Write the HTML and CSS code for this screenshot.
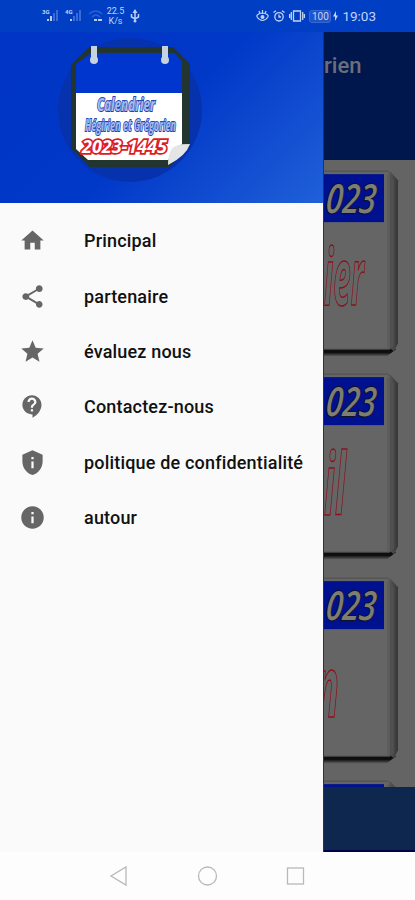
FILE: index.html
```html
<!DOCTYPE html>
<html lang="fr">
<head>
  <meta charset="UTF-8" />
  <meta name="viewport" content="width=device-width, initial-scale=1" />
  <title>Calendrier</title>
  <link rel="stylesheet" href="styles.css">
</head>
<body>

  <header class="status-bar">
    <div class="status-left">
      <svg width="20" height="16" viewBox="0 0 20 16">
        <text class="net" x="0" y="6">3G</text>
        <path d="M5 13h2v-2H5zM8 13h2V8H8z" fill="#b9cdf5"/>
        <path d="M11 13h2V5h-2zM14 13h2V2h-2z" fill="#3b69d6"/>
      </svg>
      <svg width="22" height="16" viewBox="0 0 20 16">
        <text class="net" x="0" y="6">4G</text>
        <path d="M5 13h2v-2H5z" fill="#b9cdf5"/>
        <path d="M8 13h2V8H8zM11 13h2V5h-2zM14 13h2V2h-2z" fill="#3b69d6"/>
      </svg>
      <svg class="wifi" width="16" height="16" viewBox="0 0 16 16">
        <path d="M1 6q7-6 13 0M4 9q4-4 8 0" fill="none" stroke="#2f60d2" stroke-width="1.3"/>
        <path d="M6 12h3M10 12h4" stroke="#b9cdf5" stroke-width="2"/>
      </svg>
      <div class="speed"><span>22.5</span><span>K/s</span></div>
      <svg class="usb" width="10" height="14" viewBox="0 0 10 14">
        <path d="M5 1v12M1.500 5v3L5 10l3.500-2V5" fill="none" stroke="#b9cdf5" stroke-width="1.500"/>
        <path d="M5 0l2.500 4h-5z" fill="#b9cdf5"/>
        <circle cx="5" cy="12" r="1.500" fill="#b9cdf5"/>
      </svg>
    </div>
    <div class="status-right">
      <svg width="13" height="12" viewBox="0 0 13 12">
        <path d="M1 5q5.500-4 11 0M1 7q5.500 7 11 0M3 1l1 3M6.500 0v4M10 1L9 4M1 5v2M12 5v2" fill="none" stroke="#c3d3f5" stroke-width="1.200"/>
        <circle cx="6.500" cy="7" r="2" fill="#c3d3f5"/>
      </svg>
      <svg width="12" height="12" viewBox="0 0 12 12">
        <g fill="none" stroke="#c3d3f5" stroke-width="1.300">
          <circle cx="6" cy="6.800" r="4.200"/>
          <path d="M.5 2.500L3 .7M11.500 2.500L9 .7M6 4.500V7h2"/>
        </g>
      </svg>
      <svg width="16" height="12" viewBox="0 0 16 12">
        <path d="M4.500 1h7v10h-7zM2.300 2v8M13.700 2v8M.6 4v4M15.400 4v4" fill="none" stroke="#c3d3f5" stroke-width="1.300"/>
      </svg>
      <span class="battery">100</span>
      <svg class="bolt" width="5" height="10" viewBox="0 0 5 10">
        <path d="M3 0L0 5.500h2L2 10l3-5.500H3z" fill="#c3d3f5"/>
      </svg>
      <span class="clock">19:03</span>
    </div>
  </header>

  <div class="screen">
    <aside class="drawer">
      <div class="drawer-header">
        <svg class="logo" width="146" height="146" viewBox="0 0 146 146">
          <circle cx="73" cy="73" r="72" fill="#0732ad"/>
          <path d="M32 10h84l17 17v82l-21 21H33l-19-19V28z" fill="#23352f"/>
          <path d="M34 16h84l7 9v31H19V27z" fill="#0036cd"/>
          <path d="M19 56h106v56l-14 11H31l-12-11z" fill="#fff"/>
          <path d="M111 129q2-16 22-21l-2-1h-6q-13 5-14 22z" fill="#b8bcbd"/>
          <path d="M111 128q0-21 14-20l8-1q-4 12-22 21z" fill="#e3e5e6"/>
          <g fill="#c6d2df">
            <path d="M34 9h6v14h-6zM105 9h6v14h-6z"/>
            <circle cx="37" cy="23" r="4"/>
            <circle cx="108" cy="23" r="4"/>
          </g>
          <text class="logo-blue" x="40" y="74" font-size="18" textLength="58" lengthAdjust="spacingAndGlyphs">Calendrier</text>
          <text class="logo-blue" x="28" y="94" font-size="16" textLength="91" lengthAdjust="spacingAndGlyphs">Hégirien et Grégorien</text>
          <text class="logo-red" x="25" y="116" font-size="18" textLength="85" lengthAdjust="spacingAndGlyphs">2023-1445</text>
        </svg>
      </div>

      <nav class="menu">
        <a href="#">
          <svg viewBox="0 0 24 24"><path d="M10 20v-6h4v6h5v-8h3L12 3 2 12h3v8z"/></svg>
          <span>Principal</span>
        </a>
        <a href="#">
          <svg viewBox="0 0 24 24"><path d="M18 16.080c-.76 0-1.440.3-1.960.77L8.910 12.700c.05-.23.09-.46.09-.7s-.04-.47-.09-.7l7.050-4.110c.54.5 1.250.81 2.040.81 1.660 0 3-1.340 3-3s-1.340-3-3-3-3 1.340-3 3c0 .24.04.47.09.7L8.040 9.810C7.500 9.310 6.790 9 6 9c-1.660 0-3 1.340-3 3s1.340 3 3 3c.79 0 1.500-.31 2.040-.81l7.120 4.160c-.05.21-.08.43-.08.65 0 1.610 1.310 2.920 2.920 2.920s2.920-1.310 2.920-2.920-1.310-2.920-2.920-2.920z"/></svg>
          <span>partenaire</span>
        </a>
        <a href="#">
          <svg viewBox="0 0 24 24"><path d="M12 17.270L18.180 21l-1.640-7.030L22 9.240l-7.190-.61L12 2 9.190 8.630 2 9.240l5.460 4.730L5.820 21z"/></svg>
          <span>évaluez nous</span>
        </a>
        <a href="#">
          <svg viewBox="0 0 24 24"><path d="M11.500 2C6.810 2 3 5.810 3 10.500S6.810 19 11.500 19h.5v3c4.860-2.340 8-7 8-11.500C20 5.810 16.190 2 11.500 2zm1 14.500h-2v-2h2v2zm0-3.500h-2c0-3.250 3-3 3-5 0-1.100-.9-2-2-2s-2 .9-2 2h-2c0-2.210 1.790-4 4-4s4 1.790 4 4c0 2.500-3 2.750-3 5z"/></svg>
          <span>Contactez-nous</span>
        </a>
        <a href="#">
          <svg viewBox="0 0 24 24"><path d="M12 1L3 5v6c0 5.550 3.840 10.740 9 12 5.160-1.260 9-6.450 9-12V5l-9-4zm1 16h-2v-6h2v6zm0-8h-2V7h2v2z"/></svg>
          <span>politique de confidentialité</span>
        </a>
        <a href="#">
          <svg viewBox="0 0 24 24"><path d="M12 2C6.480 2 2 6.480 2 12s4.480 10 10 10 10-4.480 10-10S17.520 2 12 2zm1 15h-2v-6h2v6zm0-8h-2V7h2v2z"/></svg>
          <span>autour</span>
        </a>
      </nav>
    </aside>

    <main class="app">
      <div class="app-bar"><h1>rien</h1></div>
      <div class="months">
        <svg class="card" viewBox="0 0 91 203">
          <use href="#page"/>
          <text class="year" transform="translate(1 42) skewX(-6)" textLength="50" lengthAdjust="spacingAndGlyphs">023</text>
          <text class="month" transform="translate(0 134)" font-size="78" textLength="40" lengthAdjust="spacingAndGlyphs">ier</text>
        </svg>
        <svg class="card" viewBox="0 0 91 203">
          <use href="#page"/>
          <text class="year" transform="translate(1 42) skewX(-6)" textLength="50" lengthAdjust="spacingAndGlyphs">023</text>
          <text class="month" transform="translate(0 141)" font-size="86" textLength="22" lengthAdjust="spacingAndGlyphs">il</text>
        </svg>
        <svg class="card" viewBox="0 0 91 203">
          <use href="#page"/>
          <text class="year" transform="translate(1 42) skewX(-6)" textLength="50" lengthAdjust="spacingAndGlyphs">023</text>
          <text class="month" transform="translate(-8 139)" font-size="84" textLength="23" lengthAdjust="spacingAndGlyphs">n</text>
        </svg>
        <svg class="card" viewBox="0 0 91 203">
          <use href="#page"/>
        </svg>
      </div>
      <div class="banner"></div>
    </main>
  </div>

  <footer class="nav-bar">
    <svg width="196" height="22" viewBox="0 0 196 22" fill="none" stroke="#b9b9b9" stroke-width="1.300">
      <path d="M17 2v18L2 11z"/>
      <circle cx="98.500" cy="11" r="9"/>
      <rect x="178.500" y="3" width="16" height="16"/>
    </svg>
  </footer>

  <!-- shared calendar sheet -->
  <svg class="defs" width="0" height="0">
    <defs>
      <linearGradient id="side">
        <stop offset="0" stop-color="#555"/>
        <stop offset="1" stop-color="#363636"/>
      </linearGradient>
      <linearGradient id="under" x1="0" y1="0" x2="0" y2="1">
        <stop offset="0" stop-color="#080808"/>
        <stop offset=".6" stop-color="#101010"/>
        <stop offset="1" stop-color="#5a5a5a"/>
      </linearGradient>
      <symbol id="page" viewBox="0 0 91 203" overflow="visible">
        <path d="M0 176h67l5 2-9 7H0z" fill="url(#under)"/>
        <path d="M66 0l8 9v163l-4 8-4-3z" fill="url(#side)"/>
        <path d="M-2 0h66l2 2v176H-2z" fill="#656565" stroke="#505050"/>
        <path d="M64 3v174M69 9v166" stroke="#565656" fill="none"/>
        <rect x="-1" y="3" width="61" height="48" fill="#00118f"/>
      </symbol>
    </defs>
  </svg>

</body>
</html>
```

FILE: styles.css
```css
* {
  box-sizing: border-box;
}

body {
  margin: 0;
  height: 900px;
  display: flex;
  flex-direction: column;
  overflow: hidden;
  font-family: Roboto, sans-serif;
  background-color: #fdfdfd;
}

svg {
  display: block;
  flex-shrink: 0;
}

.status-bar {
  height: 32px;
  display: flex;
  justify-content: space-between;
  padding: 0 39px 0 42px;
  background-color: #003fc3;
  color: #c3d3f5;
}

.status-left,
.status-right {
  display: flex;
  align-items: center;
}

.status-left {
  gap: 2px;
}

.status-right {
  gap: 4px;
}

.net {
  font-size: 6px;
  font-weight: bold;
  fill: #c3d3f5;
}

.speed {
  display: flex;
  flex-direction: column;
  align-items: center;
  width: 19px;
  font-size: 9px;
  line-height: 10px;
}

.usb {
  margin-left: 3px;
}

.battery {
  border: 1px solid #3768d2;
  border-radius: 3px;
  background-color: #1f55ca;
  width: 22px;
  font-size: 10px;
  line-height: 11px;
  text-align: center;
}

.bolt {
  margin-left: -2px;
}

.clock {
  font-size: 13.500px;
}

.screen {
  height: 820px;
  display: grid;
  grid-template-columns: 323px 92px;
}

.drawer {
  background-color: #fafafa;
}

.drawer-header {
  height: 171px;
  padding: 5px 0 0 57px;
  background: linear-gradient(135deg, #0035c5 0%, #0038c8 50%, #2060d8 100%);
}

.logo-blue,
.logo-red {
  font-family: "Open Sans", sans-serif;
  font-weight: bold;
  font-style: italic;
  line-height: 1;
  paint-order: stroke;
}

.logo-blue {
  fill: #a9bdec;
  stroke: #1d49b8;
  stroke-width: 2px;
}

.logo-red {
  fill: #fff;
  stroke: #dc1c24;
  stroke-width: 3.500px;
}

.menu {
  padding-top: 10px;
}

.menu a {
  height: 55.400px;
  display: flex;
  align-items: center;
  gap: 38px;
  padding-left: 19px;
  color: #111;
  font-size: 18px;
  font-weight: 500;
  letter-spacing: 0.180px;
  text-decoration: none;
  white-space: nowrap;
}

.menu svg {
  width: 27px;
  height: 27px;
  fill: #666;
}

.app {
  display: flex;
  flex-direction: column;
  overflow: hidden;
  background-color: #646464;
  border-left: 1px solid #333;
}

.app-bar {
  height: 128px;
  background-color: #00174e;
}

.app-bar h1 {
  margin: 0;
  padding-top: 20px;
  color: #6c6f7b;
  font-size: 22px;
  line-height: 27px;
  font-weight: 500;
}

.months {
  height: 627px;
  padding-top: 11px;
  overflow: hidden;
}

.card {
  width: 91px;
  height: 203.300px;
  overflow: visible;
}

.year {
  font-family: "Open Sans", sans-serif;
  font-size: 40px;
  font-style: italic;
  font-weight: 600;
  fill: #7d7d72;
  stroke: #10102a;
  stroke-width: 2px;
  paint-order: stroke;
}

.month {
  font-family: "Open Sans", sans-serif;
  font-style: italic;
  font-weight: bold;
  fill: #656565;
  stroke: #8c0f18;
  stroke-width: 1.500px;
}

.banner {
  flex: 1;
  background-color: #0d274f;
  border-bottom: 2px solid #00004a;
}

.nav-bar {
  height: 48px;
  display: flex;
  align-items: center;
  padding-left: 109px;
}

.defs {
  position: absolute;
}
```
